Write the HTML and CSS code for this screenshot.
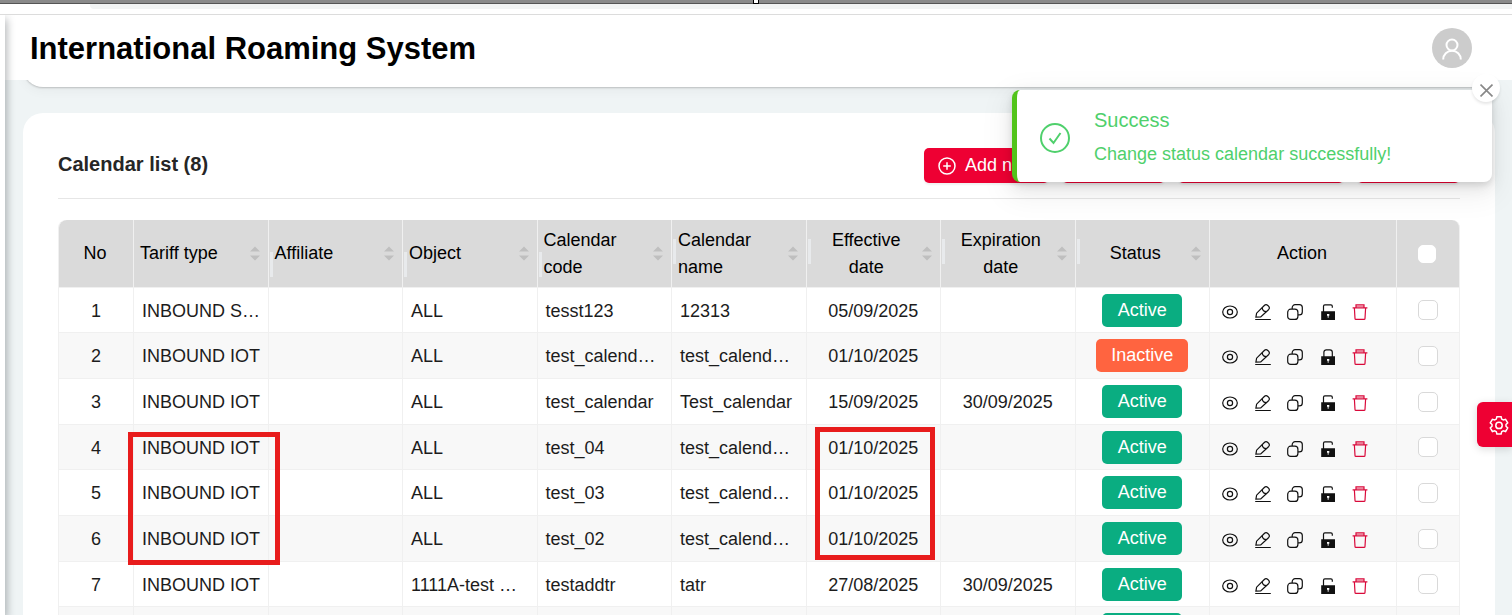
FILE: index.html
```
<!DOCTYPE html>
<html lang="en">
<head>
    <meta charset="UTF-8">
    <meta name="viewport" content="width=device-width, initial-scale=1.0">
    <title>International Roaming System</title>
    <link rel="stylesheet" href="styles.css">
</head>
<body>
    <svg class="sprite" aria-hidden="true">
        <symbol id="eye" viewBox="0 0 16 16">
            <ellipse cx="8" cy="8" rx="7.3" ry="6"/>
            <circle cx="8" cy="8" r="2.6"/>
        </symbol>
        <symbol id="edit" viewBox="0 0 16 16">
            <path d="M.9 13.2l.7-4L9.3 1.5a2.5 2.5 0 0 1 3.5 0l.7.7a2.5 2.5 0 0 1 0 3.500L5.700 12.900z"/>
            <path d="M7.200 3.800a4.600 4.600 0 0 0 4.200 3.900M.2 15.500h15.600"/>
        </symbol>
        <symbol id="copy" viewBox="0 0 16 16">
            <rect x=".7" y="5.2" width="10.2" height="10.2" rx="3"/>
            <path d="M5.2 5V3.6A2.9 2.9 0 0 1 8.1.7h4.3a2.9 2.9 0 0 1 2.9 2.9v4.3a2.9 2.9 0 0 1-2.9 2.9H11"/>
        </symbol>
        <symbol id="unlock" viewBox="0 0 16 16">
            <path d="M3.5 8V2.2a1.4 1.4 0 0 1 1.4-1.4h6a1.4 1.4 0 0 1 1.4 1.4v1.6"/>
            <path class="solid" fill-rule="evenodd" d="M1.200 7.200h13.800v8.800H1.200zM7 10v1.800h.7v2h.9v-2h.7V10z"/>
        </symbol>
        <symbol id="lock" viewBox="0 0 16 16">
            <path d="M3.9 8V3.2A2.4 2.4 0 0 1 6.3.8h3.6a2.4 2.4 0 0 1 2.4 2.4V8"/>
            <path class="solid" fill-rule="evenodd" d="M1.200 7.200h13.800v8.800H1.200zM7 10v1.800h.7v2h.9v-2h.7V10z"/>
        </symbol>
        <symbol id="trash" viewBox="0 0 16 16">
            <path d="M.6 3.9h14.8M4 3.6V.9h8v2.7M2.4 4.2l.6 10.3c0 .6.4.9 1 .9h8c.6 0 1-.3 1-.9l.6-10.3"/>
            <path d="M4 2.4h8" opacity=".5"/>
        </symbol>
        <symbol id="sort" viewBox="0 0 10 15">
            <path class="solid" d="M0 5.500L5 .5l5 5zM0 9.500h10l-5 5z"/>
        </symbol>
    </svg>

    <div class="browser-edge"><span class="grip"></span></div>
    <div class="browser-strip"></div>

    <div class="app">
        <aside class="sider"></aside>
        <div class="content">
            <header class="header">
                <h1 class="title">International Roaming System</h1>
                <button class="avatar" aria-label="Account">
                    <svg viewBox="0 0 40 40"><circle cx="20" cy="17" r="5.5"/><path d="M11.200 31.500a8.800 8.800 0 0 1 17.600 0"/></svg>
                </button>
            </header>
            <section class="filter-panel"></section>

            <main class="card">
                <div class="card-head">
                    <h2 class="card-title">Calendar list (8)</h2>
                    <div class="toolbar">
                        <button class="btn btn-add">
                            <svg viewBox="0 0 18 18"><circle cx="9" cy="9" r="8"/><path d="M9 5.2v7.6M5.2 9h7.6"/></svg>
                            Add new
                        </button>
                        <button class="btn" aria-label="Delete"></button>
                        <button class="btn btn-wide" aria-label="Change status"></button>
                        <button class="btn" aria-label="Export"></button>
                    </div>
                </div>

                <table class="table">
                    <colgroup>
                        <col class="col-no">
                        <col><col><col><col><col><col><col><col>
                        <col class="col-action">
                        <col class="col-check">
                    </colgroup>
                    <thead>
                        <tr>
                            <th class="center">No</th>
                            <th><div class="sorter"><span>Tariff type</span><svg><use href="#sort"/></svg></div></th>
                            <th class="resize low"><div class="sorter"><span>Affiliate</span><svg><use href="#sort"/></svg></div></th>
                            <th class="resize low"><div class="sorter"><span>Object</span><svg><use href="#sort"/></svg></div></th>
                            <th class="resize low"><div class="sorter"><span>Calendar code</span><svg><use href="#sort"/></svg></div></th>
                            <th class="resize"><div class="sorter"><span>Calendar name</span><svg><use href="#sort"/></svg></div></th>
                            <th class="resize center"><div class="sorter"><span>Effective date</span><svg><use href="#sort"/></svg></div></th>
                            <th class="resize center"><div class="sorter"><span>Expiration date</span><svg><use href="#sort"/></svg></div></th>
                            <th class="resize center"><div class="sorter"><span>Status</span><svg><use href="#sort"/></svg></div></th>
                            <th class="center">Action</th>
                            <th class="center"><input type="checkbox" class="check check-all" aria-label="Select all"></th>
                        </tr>
                    </thead>
                    <tbody>
                        <tr>
                            <td class="num">1</td>
                            <td>INBOUND S…</td>
                            <td></td>
                            <td>ALL</td>
                            <td>tesst123</td>
                            <td>12313</td>
                            <td class="date">05/09/2025</td>
                            <td class="date"></td>
                            <td class="center"><span class="tag">Active</span></td>
                            <td><div class="actions">
                                <button aria-label="View"><svg><use href="#eye"/></svg></button>
                                <button aria-label="Edit"><svg><use href="#edit"/></svg></button>
                                <button aria-label="Copy"><svg><use href="#copy"/></svg></button>
                                <button aria-label="Lock"><svg><use href="#unlock"/></svg></button>
                                <button aria-label="Delete" class="danger"><svg><use href="#trash"/></svg></button>
                            </div></td>
                            <td class="center"><input type="checkbox" class="check" aria-label="Select row 1"></td>
                        </tr>
                        <tr>
                            <td class="num">2</td>
                            <td>INBOUND IOT</td>
                            <td></td>
                            <td>ALL</td>
                            <td>test_calend…</td>
                            <td>test_calend…</td>
                            <td class="date">01/10/2025</td>
                            <td class="date"></td>
                            <td class="center"><span class="tag inactive">Inactive</span></td>
                            <td><div class="actions">
                                <button aria-label="View"><svg><use href="#eye"/></svg></button>
                                <button aria-label="Edit"><svg><use href="#edit"/></svg></button>
                                <button aria-label="Copy"><svg><use href="#copy"/></svg></button>
                                <button aria-label="Unlock"><svg><use href="#lock"/></svg></button>
                                <button aria-label="Delete" class="danger"><svg><use href="#trash"/></svg></button>
                            </div></td>
                            <td class="center"><input type="checkbox" class="check" aria-label="Select row 2"></td>
                        </tr>
                        <tr>
                            <td class="num">3</td>
                            <td>INBOUND IOT</td>
                            <td></td>
                            <td>ALL</td>
                            <td>test_calendar</td>
                            <td>Test_calendar</td>
                            <td class="date">15/09/2025</td>
                            <td class="date">30/09/2025</td>
                            <td class="center"><span class="tag">Active</span></td>
                            <td><div class="actions">
                                <button aria-label="View"><svg><use href="#eye"/></svg></button>
                                <button aria-label="Edit"><svg><use href="#edit"/></svg></button>
                                <button aria-label="Copy"><svg><use href="#copy"/></svg></button>
                                <button aria-label="Lock"><svg><use href="#unlock"/></svg></button>
                                <button aria-label="Delete" class="danger"><svg><use href="#trash"/></svg></button>
                            </div></td>
                            <td class="center"><input type="checkbox" class="check" aria-label="Select row 3"></td>
                        </tr>
                        <tr>
                            <td class="num">4</td>
                            <td>INBOUND IOT</td>
                            <td></td>
                            <td>ALL</td>
                            <td>test_04</td>
                            <td>test_calend…</td>
                            <td class="date">01/10/2025</td>
                            <td class="date"></td>
                            <td class="center"><span class="tag">Active</span></td>
                            <td><div class="actions">
                                <button aria-label="View"><svg><use href="#eye"/></svg></button>
                                <button aria-label="Edit"><svg><use href="#edit"/></svg></button>
                                <button aria-label="Copy"><svg><use href="#copy"/></svg></button>
                                <button aria-label="Lock"><svg><use href="#unlock"/></svg></button>
                                <button aria-label="Delete" class="danger"><svg><use href="#trash"/></svg></button>
                            </div></td>
                            <td class="center"><input type="checkbox" class="check" aria-label="Select row 4"></td>
                        </tr>
                        <tr>
                            <td class="num">5</td>
                            <td>INBOUND IOT</td>
                            <td></td>
                            <td>ALL</td>
                            <td>test_03</td>
                            <td>test_calend…</td>
                            <td class="date">01/10/2025</td>
                            <td class="date"></td>
                            <td class="center"><span class="tag">Active</span></td>
                            <td><div class="actions">
                                <button aria-label="View"><svg><use href="#eye"/></svg></button>
                                <button aria-label="Edit"><svg><use href="#edit"/></svg></button>
                                <button aria-label="Copy"><svg><use href="#copy"/></svg></button>
                                <button aria-label="Lock"><svg><use href="#unlock"/></svg></button>
                                <button aria-label="Delete" class="danger"><svg><use href="#trash"/></svg></button>
                            </div></td>
                            <td class="center"><input type="checkbox" class="check" aria-label="Select row 5"></td>
                        </tr>
                        <tr>
                            <td class="num">6</td>
                            <td>INBOUND IOT</td>
                            <td></td>
                            <td>ALL</td>
                            <td>test_02</td>
                            <td>test_calend…</td>
                            <td class="date">01/10/2025</td>
                            <td class="date"></td>
                            <td class="center"><span class="tag">Active</span></td>
                            <td><div class="actions">
                                <button aria-label="View"><svg><use href="#eye"/></svg></button>
                                <button aria-label="Edit"><svg><use href="#edit"/></svg></button>
                                <button aria-label="Copy"><svg><use href="#copy"/></svg></button>
                                <button aria-label="Lock"><svg><use href="#unlock"/></svg></button>
                                <button aria-label="Delete" class="danger"><svg><use href="#trash"/></svg></button>
                            </div></td>
                            <td class="center"><input type="checkbox" class="check" aria-label="Select row 6"></td>
                        </tr>
                        <tr>
                            <td class="num">7</td>
                            <td>INBOUND IOT</td>
                            <td></td>
                            <td>1111A-test …</td>
                            <td>testaddtr</td>
                            <td>tatr</td>
                            <td class="date">27/08/2025</td>
                            <td class="date">30/09/2025</td>
                            <td class="center"><span class="tag">Active</span></td>
                            <td><div class="actions">
                                <button aria-label="View"><svg><use href="#eye"/></svg></button>
                                <button aria-label="Edit"><svg><use href="#edit"/></svg></button>
                                <button aria-label="Copy"><svg><use href="#copy"/></svg></button>
                                <button aria-label="Lock"><svg><use href="#unlock"/></svg></button>
                                <button aria-label="Delete" class="danger"><svg><use href="#trash"/></svg></button>
                            </div></td>
                            <td class="center"><input type="checkbox" class="check" aria-label="Select row 7"></td>
                        </tr>
                        <tr>
                            <td></td><td></td><td></td><td></td><td></td><td></td><td></td><td></td>
                            <td class="center"><span class="tag"></span></td>
                            <td></td><td></td>
                        </tr>
                    </tbody>
                </table>
            </main>
        </div>
    </div>

    <div class="toast" role="status">
        <svg class="toast-icon" viewBox="0 0 30 30"><circle cx="15" cy="15" r="14"/><path d="M9.5 15.500l4 4.500 7-10"/></svg>
        <div class="toast-body">
            <div class="toast-title">Success</div>
            <div class="toast-text">Change status calendar successfully!</div>
        </div>
        <button class="toast-close" aria-label="Close">
            <svg viewBox="0 0 12 12"><path d="M.5.5l11 11M11.5.5l-11 11"/></svg>
        </button>
    </div>

    <button class="settings" aria-label="Settings">
        <svg viewBox="0 0 20 20">
            <path d="M7.9 1.8h4.2l.6 2.3 1.6.9 2.3-.7 2.1 3.6-1.7 1.6v1.8l1.7 1.6-2.1 3.6-2.3-.7-1.6.9-.6 2.3H7.9l-.6-2.3-1.6-.9-2.3.7-2.1-3.6L3 11.3V9.5L1.3 7.9l2.1-3.6 2.3.7 1.6-.9z"/>
            <circle cx="10" cy="10.4" r="3.2"/>
        </svg>
    </button>

    <div class="mark mark-tariff"></div>
    <div class="mark mark-date"></div>
</body>
</html>
```
FILE: styles.css
```
* {
    box-sizing: border-box;
}

body {
    margin: 0;
    height: 100vh;
    overflow: hidden;
    position: relative;
    display: flex;
    flex-direction: column;
    font-family: "Liberation Sans", Arial, sans-serif;
    font-size: 18px;
    color: #1c1c1c;
    background: #fff;
}

h1, h2 {
    margin: 0;
}

button {
    font-family: inherit;
    border: none;
    padding: 0;
    background: none;
    cursor: pointer;
}

svg {
    fill: none;
    stroke: currentColor;
}

.solid {
    fill: currentColor;
    stroke: none;
}

.sprite {
    position: absolute;
    width: 0;
    height: 0;
}

/* browser chrome */
.browser-edge {
    flex: none;
    height: 4px;
    background: #8a8a8a;
    border-bottom: 1px solid #555;
    display: flex;
    justify-content: center;
}

.grip {
    width: 6px;
    height: 4px;
    background: #fff;
    border: 1px solid #000;
    border-top: none;
}

.browser-strip {
    flex: none;
    height: 11px;
    padding-left: 90px;
    border-bottom: 1px solid #dcdcdc;
}

.browser-strip::before {
    content: "";
    display: block;
    height: 5px;
    background: #f2f4f4;
    border-bottom-left-radius: 4px;
}

/* layout */
.app {
    flex: 1;
    min-height: 0;
    overflow: hidden;
    display: flex;
}

.sider {
    width: 5px;
    background: #fff;
    box-shadow: 0 4px 10px rgba(29, 35, 41, 0.6);
    z-index: 2;
}

.content {
    flex: 1;
    min-width: 0;
    background: #eff4f5;
}

.header {
    position: relative;
    z-index: 1;
    height: 65px;
    padding: 0 40px 0 25px;
    display: flex;
    align-items: center;
    justify-content: space-between;
    background: #fff;
}

.title {
    padding-top: 2px;
    font-size: 31px;
    color: #000;
}

.avatar {
    width: 40px;
    height: 40px;
    border-radius: 50%;
    background: #ccc;
    color: #fff;
    stroke-width: 2;
}

.avatar svg {
    display: block;
}

/* scrolled up, only its bottom edge shows below the header */
.filter-panel {
    height: 40px;
    margin: -33px 17px 26px 18px;
    background: #fff;
    border-radius: 0 0 20px 20px;
    box-shadow: 0 1px 2px rgba(0, 0, 0, 0.2), 0 4px 12px rgba(0, 0, 0, 0.04);
}

.card {
    margin: 0 17px 0 18px;
    padding: 35px;
    background: #fff;
    border-radius: 20px 20px 0 0;
}

.card-head {
    display: flex;
    align-items: center;
    justify-content: space-between;
    padding-bottom: 15px;
    margin-bottom: 21px;
    border-bottom: 1px solid #e6e6e6;
}

.card-title {
    font-size: 20px;
    line-height: 33px;
    padding-bottom: 2px;
    color: #262626;
}

.toolbar {
    display: flex;
    gap: 13px;
}

.btn {
    width: 103px;
    height: 35px;
    border-radius: 5px;
    background: #ee0033;
    color: #fff;
    font-size: 18px;
    box-shadow: 0 2px 2px rgba(0, 0, 0, 0.06);
}

.btn-wide {
    width: 166px;
}

.btn-add {
    width: 125px;
    display: flex;
    align-items: center;
    gap: 9px;
    padding-left: 14px;
    white-space: nowrap;
}

.btn-add svg {
    flex: none;
    width: 18px;
    height: 18px;
    stroke-width: 1.5;
}

/* table */
.table {
    width: 100%;
    table-layout: fixed;
    border-collapse: separate;
    border-spacing: 0;
    border-left: 1px solid #f0f0f0;
    border-radius: 8px 8px 0 0;
}

.col-no {
    width: 75px;
}

.col-action {
    width: 187px;
}

.col-check {
    width: 63px;
}

.table th,
.table td {
    border-right: 1px solid #f0f0f0;
    border-bottom: 1px solid #f0f0f0;
}

.table th {
    position: relative;
    height: 68px;
    padding: 0 8px 0 6px;
    background: #dadada;
    color: #000;
    font-weight: 400;
    line-height: 27px;
    text-align: left;
}

.table th:first-child {
    border-top-left-radius: 8px;
}

.table th:last-child {
    border-top-right-radius: 8px;
}

.table td {
    height: 46px;
    padding: 2px 4px 0 8px;
    line-height: 27px;
    white-space: nowrap;
    overflow: hidden;
    text-overflow: ellipsis;
}

.table tr:nth-child(3n+1) td {
    height: 45px;
}

.table tbody tr:nth-child(even) {
    background: #f8f8f8;
}

.table .center,
.table .num,
.table .date {
    text-align: center;
}

.table .num,
.table .date {
    padding: 2px 8px 0;
}

.table td.center {
    padding: 0 8px;
}

.sorter {
    display: flex;
    align-items: center;
}

.sorter span {
    flex: 1;
}

.center .sorter span {
    padding: 0 8px 0 6px;
}

.sorter svg {
    flex: none;
    width: 10px;
    height: 15px;
    color: #bfbfbf;
}

/* column drag handle */
.resize::before {
    content: "";
    position: absolute;
    left: 1px;
    top: 19px;
    width: 3px;
    height: 25px;
    background: #e8eaec;
}

.resize.low::before {
    top: 32px;
}

.tag {
    display: block;
    width: fit-content;
    min-width: 80px;
    height: 33px;
    margin: 0 auto;
    padding: 0 15px;
    border-radius: 5px;
    background: #0aad81;
    color: #fff;
    line-height: 33px;
}

.tag.inactive {
    background: #ff6440;
}

.actions {
    display: flex;
    justify-content: space-between;
    padding: 1px 24px 0 4px;
    color: #111;
}

.actions button {
    color: inherit;
}

.actions svg {
    display: block;
    width: 16px;
    height: 16px;
    stroke-width: 1.2;
}

.actions .danger {
    color: #d9093a;
}

.check {
    appearance: none;
    display: block;
    width: 20px;
    height: 20px;
    margin: 0 auto;
    border: 1px solid #d9d9d9;
    border-radius: 5px;
    background: #fff;
}

.check-all {
    width: 18px;
    height: 18px;
    border-color: #fff;
}

/* notification */
.toast {
    position: absolute;
    top: 90px;
    right: 20px;
    width: 480px;
    height: 92px;
    padding-left: 23px;
    display: flex;
    align-items: center;
    gap: 24px;
    background: #fff;
    border-left: 5px solid #52c41a;
    border-radius: 8px;
    color: #4fd06c;
    box-shadow: 0 6px 16px rgba(0, 0, 0, 0.08), 0 3px 6px rgba(0, 0, 0, 0.1), 0 9px 28px 8px rgba(0, 0, 0, 0.05);
    z-index: 2;
}

.toast-icon {
    flex: none;
    width: 30px;
    height: 30px;
    margin-top: 4px;
    stroke-width: 2;
}

.toast-body {
    padding-top: 2px;
    line-height: 34px;
}

.toast-title {
    font-size: 20px;
}

.toast-close {
    position: absolute;
    top: -16px;
    right: -8px;
    width: 28px;
    height: 28px;
    display: flex;
    align-items: center;
    justify-content: center;
    padding-top: 4px;
    border-radius: 50%;
    background: #fff;
    color: #888;
    box-shadow: 0 2px 3px rgba(0, 0, 0, 0.1);
}

.toast-close svg {
    width: 13px;
    height: 13px;
    stroke-width: 1.5;
}

.settings {
    position: absolute;
    top: 402px;
    right: 0;
    width: 35px;
    height: 45px;
    padding-left: 12px;
    border-radius: 6px 0 0 6px;
    background: #ee0033;
    color: #fff;
    box-shadow: 0 2px 8px rgba(0, 0, 0, 0.15);
    z-index: 2;
}

.settings svg {
    display: block;
    width: 20px;
    height: 20px;
    stroke-width: 1.5;
}

/* highlighted cells */
.mark {
    position: absolute;
    height: 133px;
    border: 5px solid #e81c1c;
    z-index: 3;
}

.mark-tariff {
    top: 432px;
    left: 128px;
    width: 152px;
}

.mark-date {
    top: 427px;
    left: 815px;
    width: 120px;
}
```
